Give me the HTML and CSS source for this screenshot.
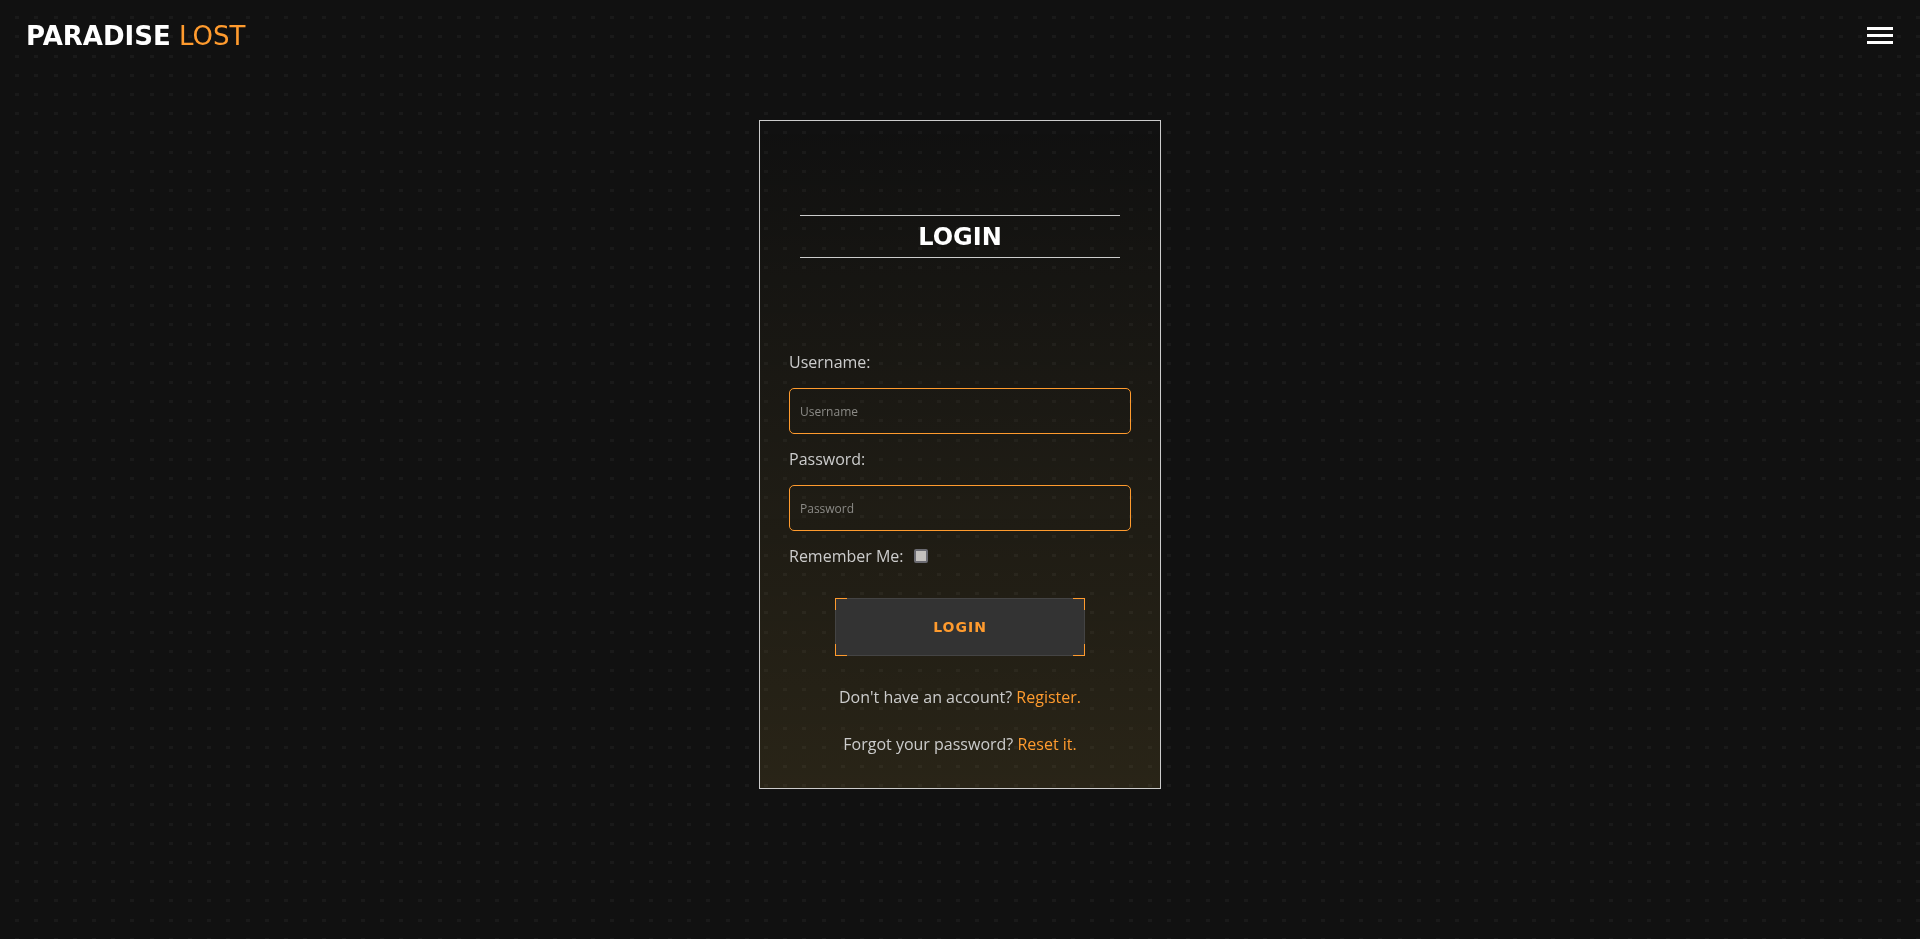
FILE: index.html
```
<!DOCTYPE html>
<html lang="en">
<head>
<meta charset="utf-8">
<meta name="viewport" content="width=device-width, initial-scale=1">
<title>Paradise Lost - Login</title>
<link rel="stylesheet" href="styles.css">
</head>
<body>
<header class="header">
  <a class="brand" href="#"><strong>PARADISE</strong> <span class="brand-accent">LOST</span></a>
  <button class="menu" type="button" aria-label="Menu">
    <svg width="26" height="17" viewBox="0 0 26 17" fill="#fff" aria-hidden="true">
      <rect width="26" height="3"/><rect y="7" width="26" height="3"/><rect y="14" width="26" height="3"/>
    </svg>
  </button>
</header>
<main class="main">
  <section class="panel">
    <h1 class="title">LOGIN</h1>
    <form class="form">
      <label class="label" for="username">Username:</label>
      <input class="field" id="username" type="text" placeholder="Username">
      <label class="label" for="password">Password:</label>
      <input class="field" id="password" type="password" placeholder="Password">
      <div class="remember">
        <label for="remember">Remember Me:</label>
        <input class="check" id="remember" type="checkbox">
      </div>
      <button class="submit" type="submit">LOGIN</button>
    </form>
    <p class="note">Don't have an account? <a class="link" href="#">Register.</a></p>
    <p class="note">Forgot your password? <a class="link" href="#">Reset it.</a></p>
  </section>
</main>
</body>
</html>
```
FILE: styles.css
```
* { box-sizing: border-box; }

body {
  margin: 0;
  min-height: 100vh;
  color: #ccc;
  font: 16px/24px "Open Sans", sans-serif;
  background: #111;
}

/* Dot grid behind the page: vertical stripes masked by horizontal ones, 1% of a wide window apart */
body::before {
  content: "";
  position: fixed;
  inset: -3px 0 0 -4px;
  z-index: -1;
  background: repeating-linear-gradient(90deg, #1a1a1a 0 4px, transparent 4px 1.2rem);
  -webkit-mask-image: repeating-linear-gradient(#000 0 3px, transparent 3px 1.2rem);
  mask-image: repeating-linear-gradient(#000 0 3px, transparent 3px 1.2rem);
}

.header {
  display: flex;
  align-items: center;
  justify-content: space-between;
  height: 71px;
  padding: 0 27px 0 26px;
}

.brand {
  color: #fff;
  font: 26px/32px "DejaVu Sans", sans-serif;
  text-decoration: none;
}

.brand-accent {
  color: #ff9b2e;
}

.menu {
  display: flex;
  padding: 0;
  border: 0;
  background: none;
  cursor: pointer;
}

.main {
  display: flex;
  justify-content: center;
  padding: 49px 16px;
}

.panel {
  width: 100%;
  max-width: 402px;
  padding: 94px 29px 32px;
  border: 1px solid #ccc;
  background: linear-gradient(transparent, rgba(255, 208, 80, 0.1));
}

.title {
  margin: 0 11px 92px;
  padding-top: 1px;
  border: solid #ccc;
  border-width: 1px 0;
  color: #fff;
  font: bold 24px/40px "DejaVu Sans", sans-serif;
  text-align: center;
}

.form {
  display: flex;
  flex-direction: column;
}

.label {
  align-self: flex-start;
  margin-bottom: 14px;
}

.field {
  height: 46px;
  margin-bottom: 13px;
  padding: 0 10px;
  border: 1px solid #ff9b2e;
  border-radius: 5px;
  background: none;
  color: #ccc;
  font: 12px/16px "Open Sans", sans-serif;
}

.field::placeholder { color: #8c8b87; opacity: 1; }

.remember {
  display: flex;
  align-items: center;
  gap: 10px;
  margin-bottom: 30px;
}

.check {
  appearance: none;
  width: 14px;
  height: 14px;
  margin: 0;
  border: 2px solid #6b6b72;
  border-radius: 2px;
  background: #c4c1be;
}

.check:checked { background: #ff9b2e; }

.submit {
  --c: linear-gradient(#ff9b2e, #ff9b2e) no-repeat;
  align-self: center;
  width: 250px;
  height: 58px;
  margin-bottom: 29px;
  border: 1px solid transparent;
  background:
    var(--c) 0 0 / 12px 1px border-box, var(--c) 0 0 / 1px 12px border-box,
    var(--c) 100% 0 / 12px 1px border-box, var(--c) 100% 0 / 1px 12px border-box,
    var(--c) 0 100% / 12px 1px border-box, var(--c) 0 100% / 1px 12px border-box,
    var(--c) 100% 100% / 12px 1px border-box, var(--c) 100% 100% / 1px 12px border-box,
    linear-gradient(#333, #333) padding-box,
    #444 border-box;
  color: #ff9b2e;
  font: bold 14px/20px "DejaVu Sans", sans-serif;
  letter-spacing: 1px;
  cursor: pointer;
}

.note {
  margin: 0 0 23px;
  text-align: center;
}

.note:last-child { margin-bottom: 0; }

.link {
  color: #ff9b2e;
  text-decoration: none;
}
```
